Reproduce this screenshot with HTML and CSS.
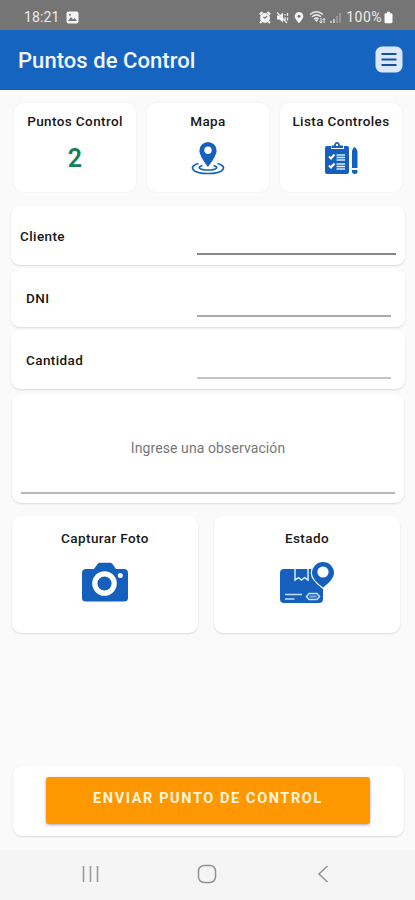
FILE: index.html
```html
<!DOCTYPE html>
<html lang="es">
<head>
<meta charset="utf-8">
<meta name="viewport" content="width=device-width, initial-scale=1">
<title>Puntos de Control</title>
<link rel="stylesheet" href="styles.css">
</head>
<body>
<div class="screen">
  <header class="status">
    <span class="clock">18:21</span>
    <svg class="picture" width="13" height="13" viewBox="0 0 13 13"><rect x=".5" y=".5" width="12" height="12" rx="2" fill="#f4f4f4"/><path d="M2 10l3-4 2 2.400L8.500 7 11 10z" fill="#757575"/><circle cx="4" cy="3.800" r="1" fill="#757575"/></svg>
    <div class="signals">
      <svg width="12" height="13" viewBox="0 0 12 13"><circle cx="6" cy="7" r="4.900" fill="#f4f4f4"/><path d="M.8 3.500L3.500 1M11.200 3.500L8.500 1M2.500 10.500L1 12M9.500 10.500L11 12" stroke="#f4f4f4" stroke-width="2"/><path d="M8.200 4.800L6 7 4.300 6" fill="none" stroke="#757575" stroke-width="1.200"/></svg>
      <svg width="13" height="13" viewBox="0 0 13 13"><path d="M1 4.500h2.500L7 1.500v10L3.500 8.500H1z" fill="#f4f4f4"/><path d="M1 1.500l10 10.500M9 3v1.500M9 6v3M11.500 2v3M11.500 6.500v3" stroke="#e8e8e8" stroke-width="1.300"/></svg>
      <svg width="10" height="13" viewBox="0 0 10 13"><path d="M5 1a4.300 4.300 0 0 0-4.300 4.300C.7 8 5 12.200 5 12.200S9.300 8 9.300 5.300A4.300 4.300 0 0 0 5 1z" fill="#f4f4f4"/><circle cx="5" cy="5.200" r="1.500" fill="#757575"/></svg>
      <svg class="wifi" width="17" height="14" viewBox="0 0 17 14"><path d="M1 4.500Q7.500-1 14 4.500M3 6.800Q7.500 3 12 6.800M5 9Q7.500 7 9.500 9" fill="none" stroke="#e8e8e8" stroke-width="1.500"/><path d="M7.500 12l-2-2.500h4z" fill="#f4f4f4"/><path d="M12 8v5M10.500 11.500L12 13l1.500-1.500M15 13V8.500M13.800 9.800L15 8.500l1.200 1.300" fill="none" stroke="#eee"/></svg>
      <svg width="13" height="13" viewBox="0 0 13 13"><path d="M2 12v-2M5 12V8" stroke="#ddd" stroke-width="1.500"/><path d="M8 12V5M11 12V2" stroke="#989898" stroke-width="1.800"/></svg>
      <span class="percent">100%</span>
      <svg width="9" height="13" viewBox="0 0 9 13"><path d="M3 .7h3v1.500h1.200Q8.500 2.200 8.500 3.500v7.300q0 1.500-1.500 1.500H2Q.5 12.300.5 10.800V3.500Q.5 2.200 1.800 2.200H3z" fill="#fff"/></svg>
    </div>
  </header>
  <div class="appbar">
    <h1>Puntos de Control</h1>
    <button class="menu" aria-label="Menú"><svg width="28" height="27" viewBox="0 0 28 27"><rect x=".5" y=".5" width="27" height="26" rx="6.500" fill="#dce8fa"/><path d="M6.500 8h15M6.500 13.500h15M6.500 19h15" stroke="#174fa5" stroke-width="2.200"/></svg></button>
  </div>
  <main>
    <section class="summary">
      <div class="card tile"><h2>Puntos Control</h2><strong>2</strong></div>
      <div class="card tile"><h2>Mapa</h2>
        <svg width="34" height="35" viewBox="0 0 34 35"><path d="M17 1a8.600 8.600 0 0 0-8.600 8.600C8.400 15.500 17 26 17 26s8.600-10.500 8.600-16.400A8.600 8.600 0 0 0 17 1z" fill="#1560bd"/><circle cx="17" cy="9.300" r="3.700" fill="#fff"/><path d="M7.500 22.500C-3 25 .5 32.500 17 32.500S37 25 26.500 22.500M11.500 24.500C5.500 26 8.500 29 17 29s11.500-3 5.500-4.500" fill="none" stroke="#1560bd" stroke-width="1.700"/></svg></div>
      <div class="card tile"><h2>Lista Controles</h2>
        <svg width="34" height="35" viewBox="0 0 34 35"><path d="M2 5h5v3h13V5h3q2 0 2 2v24q0 2-2 2H3q-2 0-2-2V7q0-2 2-2z" fill="#1560bd"/><path d="M7.500 7V4.500H10q.5-3.500 3-3.500t3 3.500h3V7z" fill="#1560bd"/><circle cx="13" cy="4" r="1.200" fill="#fff"/><path d="M12.500 14H21M12.500 16.500H21M12.500 19H21M12.500 23H21M12.500 25.500H21M12.500 28H21" stroke="#dceafa" stroke-width="1.300"/><path d="M5 15.500l2 2 3.500-4M5 24.500l2 2 3.500-4" fill="none" stroke="#fff" stroke-width="2"/><path d="M28 10l1.200-3q1.300-1.500 2.600 0L33.500 10v17H28zM28 29h5.500v2q0 2-2.700 2T28 31z" fill="#1560bd"/></svg></div>
    </section>
    <section class="fields">
      <label class="card field wide"><span>Cliente</span><input type="text"></label>
      <label class="card field"><span>DNI</span><input type="text"></label>
      <label class="card field pale"><span>Cantidad</span><input type="text"></label>
    </section>
    <div class="card note"><input type="text" placeholder="Ingrese una observación"></div>
    <section class="actions">
      <div class="card tile"><h2>Capturar Foto</h2>
        <svg width="46" height="40" viewBox="0 0 46 40"><path d="M4 7h8l3.500-5q1-1.300 2.500-1.300h10q1.500 0 2.500 1.300L34 7h8q4 0 4 4v25q0 3.500-4 3.500H4q-4 0-4-3.500V11q0-4 4-4z" fill="#1560bd"/><circle cx="22.500" cy="21.500" r="9.700" fill="none" stroke="#fff" stroke-width="5.200"/><circle cx="38.300" cy="13.500" r="2.500" fill="#fff"/></svg></div>
      <div class="card tile"><h2>Estado</h2>
        <svg width="54" height="42" viewBox="0 0 54 42"><rect x="0" y="7" width="43" height="34" rx="4" fill="#1560bd"/><path d="M15 7v11l3.500-2.300 3 2.300 3-2.300L28 18V7" fill="none" stroke="#dceafa" stroke-width="1.500"/><path d="M43 0a11 11 0 0 0-11 11c0 5 5 10 11 14.500C49 21 54 16 54 11A11 11 0 0 0 43 0z" fill="#1560bd" stroke="#fff" stroke-width="2.500" paint-order="stroke"/><circle cx="43" cy="10" r="5.600" fill="#fff"/><path d="M5 32.500h17M5 37h9.500" stroke="#c9ddf5" stroke-width="1.500"/><path d="M26.500 34.500l2.500-3h8l2.500 3-2.500 3h-8z" fill="none" stroke="#c9ddf5" stroke-width="1.500"/><path d="M29.500 34.500h7" stroke="#7eaae0" stroke-width="2"/></svg></div>
    </section>
    <div class="card submit"><button>ENVIAR PUNTO DE CONTROL</button></div>
  </main>
  <nav class="navbar">
    <svg width="18" height="18" viewBox="0 0 18 18"><path d="M1.500 1v16M8.500 1v16M15.500 1v16" stroke="#9b9b9b" stroke-width="1.600"/></svg>
    <svg class="home" width="20" height="20" viewBox="0 0 20 20"><rect x="1.500" y="1.500" width="17" height="17" rx="5.500" fill="none" stroke="#929292" stroke-width="1.500"/></svg>
    <svg width="12" height="18" viewBox="0 0 12 18"><path d="M10.500 1L2 9l8.500 8" fill="none" stroke="#929292" stroke-width="1.500"/></svg>
  </nav>
</div>
</body>
</html>
```
FILE: styles.css
```css
* { box-sizing: border-box; }
body { margin: 0; font-family: Roboto, "Liberation Sans", sans-serif; background: #fafafa; color: #171717; }
svg { display: block; flex: none; }
h1, h2 { margin: 0; font-weight: 500; }
button, input { font: inherit; border: 0; padding: 0; margin: 0; outline: 0; border-radius: 0; }
.screen { width: 415px; height: 900px; display: flex; flex-direction: column; overflow: hidden; }
.status { height: 30px; background: #757575; color: #ececec; display: flex; align-items: center; padding: 4px 22px 0 24px; }
.clock { font-size: 14px; letter-spacing: .1px; }
.picture { margin-left: 7px; }
.signals { margin-left: auto; display: flex; align-items: center; gap: 5px; }
.wifi { margin-right: -2px; }
.percent { font-size: 14px; margin-right: -3px; margin-left: -1px; letter-spacing: .5px; }
.appbar { height: 60px; background: #1565c0; display: flex; justify-content: space-between; align-items: center; padding: 0 12px 2px 18px; }
.appbar h1 { color: #f1f6ff; font-size: 22px; line-height: 28px; letter-spacing: .05px; padding-top: 3px; }
.menu { background: none; }
main { height: 760px; padding-top: 13px; display: flex; flex-direction: column; }
.card { background: #fff; border-radius: 9px; box-shadow: 0 1px 2px #00000021; }
.tile { display: flex; flex-direction: column; align-items: center; }
.tile h2 { font-size: 13.5px; line-height: 16px; letter-spacing: .4px; white-space: nowrap; }
.summary { display: grid; grid-template-columns: repeat(3, 122px); gap: 11px; padding-left: 14px; }
.summary .card { height: 89px; padding-top: 10px; box-shadow: 0 0 2px #00000012; }
.summary svg { margin-top: 12px; }
.summary strong { margin-top: 14px; color: #138057; font-size: 25px; line-height: 32px; font-weight: 600; }
.fields { margin: 14px 10px 0 11px; display: flex; flex-direction: column; gap: 3px; }
.field { height: 59px; display: flex; padding: 0 14px 0 15px; font-size: 13.5px; font-weight: 500; letter-spacing: .4px; }
.field span { flex: 1; align-self: center; }
.field input { width: 194px; height: 49px; border-bottom: 2px solid #aaa; background: none; }
.wide { padding: 0 9px; }
.wide input { width: 199px; border-color: #888; }
.pale input { border-color: #c4c4c4; }
.note { margin: 5px 11px 0 12px; height: 109px; padding: 0 9px; }
.note input { width: 100%; height: 100px; padding-top: 10px; border-bottom: 2px solid #b9b9b9; text-align: center; background: none; font-size: 14px; letter-spacing: .1px; }
.note input::placeholder { color: #777; opacity: 1; }
.actions { display: grid; grid-template-columns: 186px 186px; gap: 16px; margin: 13px 0 0 12px; }
.actions .card { height: 117px; padding-top: 14px; }
.actions svg { margin-top: 16px; }
.submit { height: 70px; margin: 133px 11px 0 13px; padding: 11px 34px 0 33px; }
.submit button { width: 100%; height: 47px; border-radius: 3px; background: #ff9800; color: #fff5df; font-size: 14.5px; font-weight: 700; letter-spacing: 1.6px; padding-bottom: 5px; box-shadow: 0 1px 3px #0005; }
.navbar { height: 50px; background: #f5f5f5; display: flex; align-items: center; justify-content: space-between; padding: 0 86px 2px 82px; }
.home { margin-right: 3px; }
```
